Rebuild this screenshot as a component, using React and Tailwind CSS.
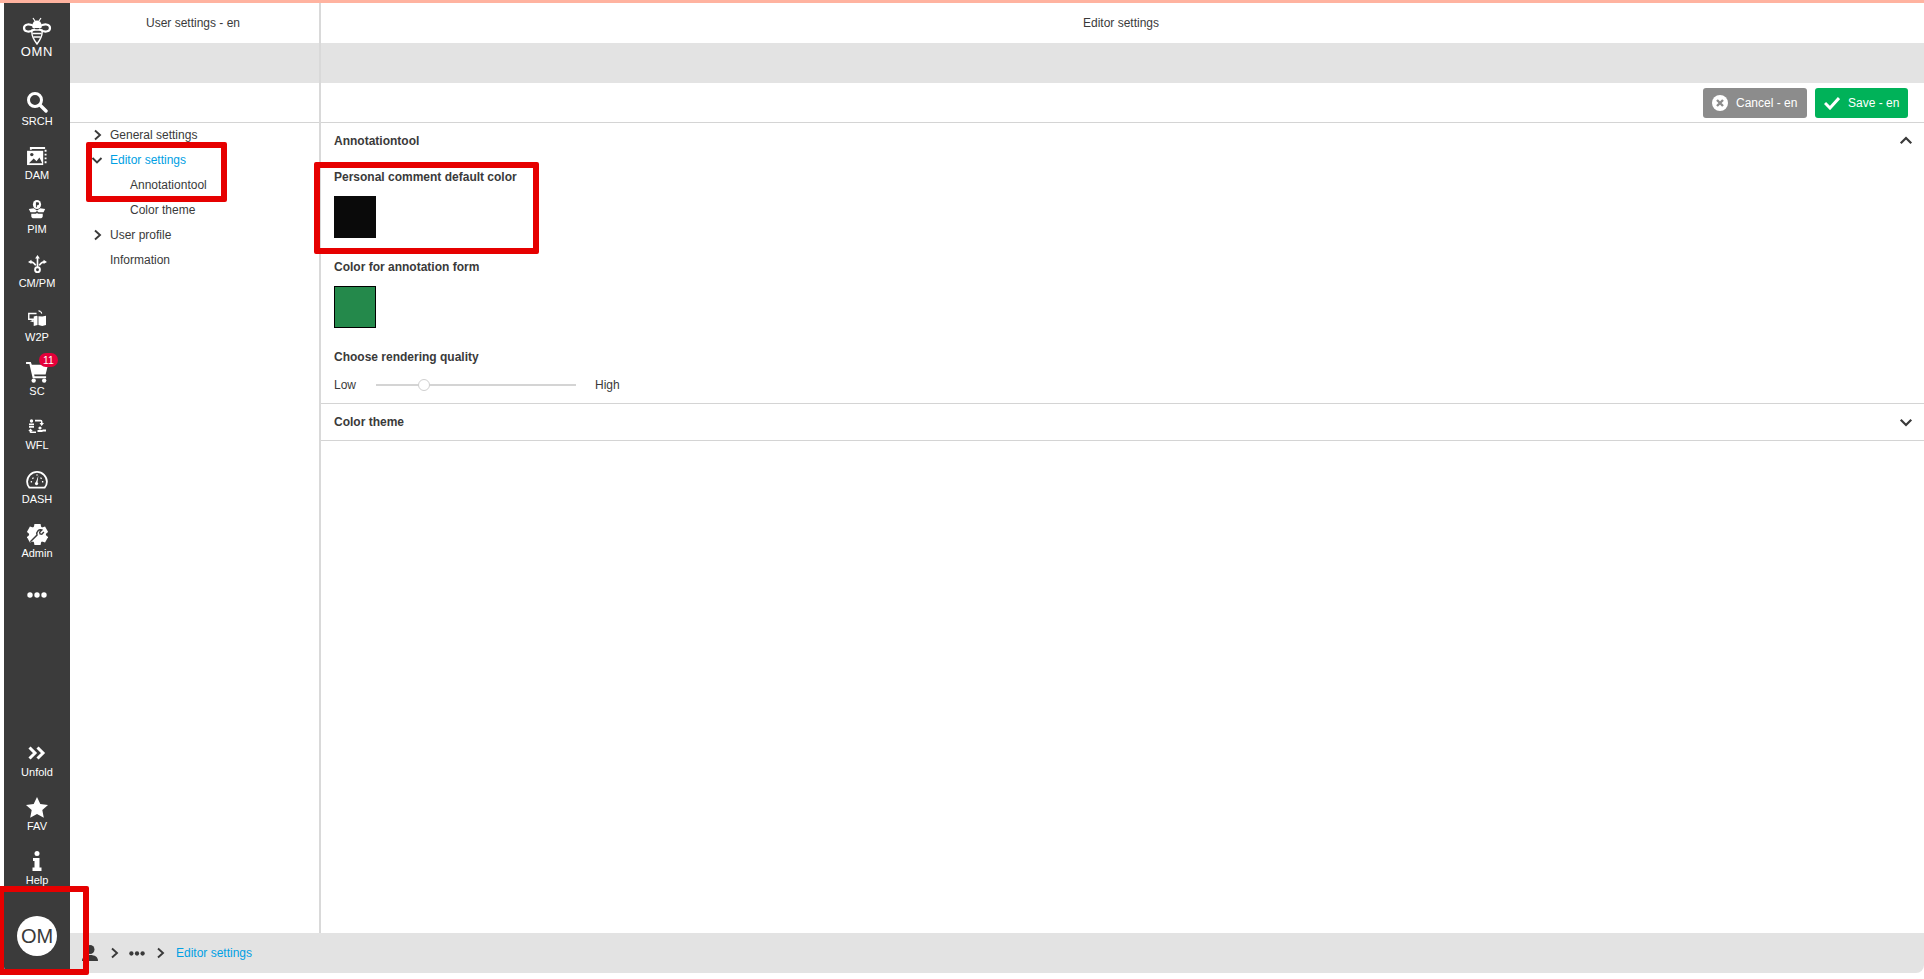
import React from 'react';

const Bee = () => (
  <svg width="30" height="28" viewBox="0 0 30 28" fill="none" stroke="#fff">
    {/* antennae + head */}
    <path d="M11 1l2 3M19 1l-2 3" strokeWidth="1.2" />
    <path d="M10.500 8a4.500 4.500 0 0 1 9 0v3h-9z" fill="#fff" stroke="none" />
    {/* wings */}
    <path d="M13 10C8 6 2 7 2 11s6 5 11 1" strokeWidth="2.200" />
    <path d="M17 10c5-4 11-3 11 1s-6 5-11 1" strokeWidth="2.200" />
    {/* body */}
    <path d="M10 13h10c1 5-2 10-5 14-3-4-6-9-5-14z" strokeWidth="1.4" />
    <path d="M10.5 16.5h9M11.5 20h7" strokeWidth="1.6" />
  </svg>
);

const SearchIcon = () => (
  <svg width="22" height="22" viewBox="0 0 22 22" fill="none" stroke="#fff">
    <circle cx="9" cy="9" r="6.5" strokeWidth="3" />
    <path d="M14 14l6 6" strokeWidth="3.4" strokeLinecap="round" />
  </svg>
);

const DamIcon = () => (
  <svg width="21" height="19" viewBox="0 0 22 20" fill="#fff">
    <path d="M3 0h16v2H5v1H3z" />
    <path d="M0 4h17v15H0z" />
    <path d="M18.5 3h2v2h-2zM18.5 7h2v2h-2zM18.5 11h2v2h-2zM18.5 15h2v2h-2z" />
    <circle cx="5" cy="8" r="1.8" fill="#3b3b3b" />
    <path d="M2 17l5-5 3 3 3-4 3 6z" fill="#3b3b3b" />
  </svg>
);

const PimIcon = () => (
  <svg width="18" height="20" viewBox="0 0 22 22" fill="#fff" preserveAspectRatio="none">
    <circle cx="11" cy="5" r="5" />
    <path d="M9.7 2.5h2.2a1.6 1.6 0 0 1 0 3.2h-1.1V8H9.7z" fill="#3b3b3b" />
    <path d="M1 10l6-1 4 2.5L15 9l6 1-2 3.5H13l-2-1.5L9 13.500H3z" />
    <path d="M4 15h6l1-1 1 1h6v3c0 1-1 2-2 2H6c-1 0-2-1-2-2z" />
  </svg>
);

const CmIcon = () => (
  <svg width="19" height="19" viewBox="0 0 22 22" fill="none" stroke="#fff" strokeWidth="1.9">
    <path d="M11 3v11M3 8c3 0 4 1 6 4M19 8c-3 0-4 1-6 4" />
    <circle cx="11" cy="17" r="2.800" strokeWidth="2.200" />
    <path d="M11 0l2.800 4H8.200zM0 8l4-2.500v5zM22 8l-4-2.500v5z" fill="#fff" stroke="none" />
  </svg>
);

const W2pIcon = () => (
  <svg width="19" height="17" viewBox="0 0 20 18" fill="#fff">
    <path d="M0 3h9v1.500H1.500V9H7v1.500H0z" />
    <path d="M2 12l4-2v3z" />
    <path d="M9 6l-3 1v10l4-1V6.500zM11 6.500V16l4 1 4-1V6l-4 1z" />
    <path d="M13 1a3 3 0 0 1 2 3h-1a2 2 0 0 0-1.500-2z" />
    <path d="M11 0l2.500 1-2 1.500z" />
  </svg>
);

const CartIcon = () => (
  <svg width="23" height="21" viewBox="0 0 24 22" fill="#fff">
    <path d="M0 0h5l1 3h17l-2.500 10H8.500l.4 2H21v2H7L3.500 2H0z" />
    <circle cx="8" cy="19.500" r="2.300" />
    <circle cx="19" cy="19.500" r="2.300" />
  </svg>
);

const WflIcon = () => (
  <svg width="18" height="14" viewBox="0 0 18 14" fill="#fff">
    {/* person top left */}
    <circle cx="3.500" cy="2" r="1.700" />
    <path d="M1 4.500h5v1.700H1zM1 7h5v1.700H1z" />
    {/* person bottom right */}
    <circle cx="12" cy="9" r="1.600" />
    <path d="M9.500 11h5v2h-5zM14.500 10.500H18v2h-3.500z" />
    {/* cycle arrows */}
    <path d="M7 .8h5.500a2 2 0 0 1 2 2V4H16l-2.300 3L11.500 4h1.500V2.500H7z" />
    <path d="M2.500 9.500L4.800 12 3.500 12v.5H8V14H3a1.500 1.500 0 0 1-1.500-1.500V12H.3z" />
  </svg>
);

const DashIcon = () => (
  <svg width="22" height="18" viewBox="0 0 24 20" fill="none" stroke="#fff">
    <path d="M3.500 18.500C1.800 16.500 1 14.500 1 12a11 11 0 0 1 22 0c0 2.500-.8 4.500-2.500 6.500z" strokeWidth="2" />
    <path d="M13.500 5l-1 8h-2z" fill="#fff" stroke="none" />
    <circle cx="11.500" cy="14" r="1.800" fill="#fff" stroke="none" />
    <path d="M5 12h1.500M7 7.500l1 1M17 7.500l-1 1M17.500 12H19M12 4v1" strokeWidth="1.800" />
  </svg>
);

const AdminIcon = () => (
  <svg width="21" height="21" viewBox="0 0 22 22" fill="#fff">
    <circle cx="11" cy="11" r="8.800" />
    {/* gear teeth */}
    {[0, 60, 120, 180, 240, 300].map((a) => (
      <path key={a} d="M7.800 0h6.400l.8 4H7z" transform={`rotate(${a} 11 11)`} />
    ))}
    {/* wrench cut */}
    <path d="M3.500 18.500L10.500 11.500a4 4 0 0 1 5-5.200l-2.200 2.200.4 1.800 1.800.4 2.200-2.200" fill="none" stroke="#3b3b3b" strokeWidth="1.500" />
  </svg>
);

const UnfoldIcon = () => (
  <svg width="18" height="14" viewBox="0 0 18 14" fill="none" stroke="#fff" strokeWidth="3">
    <path d="M1.500 1.500L7 7l-5.500 5.500M9.500 1.500L15 7l-5.500 5.500" />
  </svg>
);

const StarIcon = () => (
  <svg width="22" height="21" viewBox="0 0 22 21" fill="#fff">
    <path d="M11 0l3.300 7 7.700.9-5.700 5.200 1.500 7.600L11 16.900l-6.800 3.800 1.500-7.600L0 7.900 7.700 7z" />
  </svg>
);

const InfoIcon = () => (
  <svg width="10" height="20" viewBox="0 0 10 20" fill="#fff">
    <circle cx="5" cy="2.500" r="2.500" />
    <path d="M1 7h6.500v9.500H9.500V20H.5v-3.500H2.500V10H1z" />
  </svg>
);

const Chevron = ({ dir = 'right', size = 12, className = '' }) => {
  const d = {
    right: 'M4 1.500L9 6l-5 4.500',
    down: 'M1.500 4L6 8.500 10.500 4',
    up: 'M1.500 8L6 3.500 10.500 8',
  }[dir];
  return (
    <svg width={size} height={size} viewBox="0 0 12 12" fill="none" stroke="#3a3a3a" strokeWidth="1.900" className={className}>
      <path d={d} />
    </svg>
  );
};

const Dots = ({ color = '#fff', width = 20, height = 6 }) => (
  <svg width={width} height={height} viewBox="0 0 20 6" fill={color} className="block">
    <circle cx="3" cy="3" r="2.700" />
    <circle cx="10" cy="3" r="2.700" />
    <circle cx="17" cy="3" r="2.700" />
  </svg>
);

const SideItem = ({ icon, label, badge }) => (
  <div className="relative flex h-[54px] flex-col items-center pt-[4px]">
    <div className="flex h-[24px] items-center justify-center">{icon}</div>
    <span className="h-[14px] text-[11px] leading-[14px] text-white">{label}</span>
    {badge && (
      <span className="absolute left-[35px] top-[-3px] flex h-[14px] w-[19px] items-center justify-center rounded-full bg-[#e4003a] text-[10.5px] leading-none text-white">
        {badge}
      </span>
    )}
  </div>
);

const Sidebar = () => (
  <aside className="flex w-[66px] flex-none flex-col rounded-bl-md bg-[#3b3b3b]">
    <div className="flex h-[83px] flex-col items-center pt-[14px]">
      <Bee />
      <span className="mt-[-1px] text-[13px] leading-[16px] tracking-[0.7px] text-white">OMN</span>
    </div>
    <SideItem icon={<SearchIcon />} label="SRCH" />
    <SideItem icon={<DamIcon />} label="DAM" />
    <SideItem icon={<PimIcon />} label="PIM" />
    <SideItem icon={<CmIcon />} label="CM/PM" />
    <SideItem icon={<W2pIcon />} label="W2P" />
    <SideItem icon={<CartIcon />} label="SC" badge="11" />
    <SideItem icon={<WflIcon />} label="WFL" />
    <SideItem icon={<DashIcon />} label="DASH" />
    <SideItem icon={<AdminIcon />} label="Admin" />
    <div className="flex h-[46px] items-center justify-center">
      <Dots />
    </div>
    <div className="mt-auto">
      <SideItem icon={<UnfoldIcon />} label="Unfold" />
      <SideItem icon={<StarIcon />} label="FAV" />
      <SideItem icon={<InfoIcon />} label="Help" />
      <div className="flex h-[74px] justify-center pt-[17px]">
        <div className="flex h-[40px] w-[40px] items-center justify-center rounded-full bg-white text-[20px] leading-none text-[#3a3a3a]">
          OM
        </div>
      </div>
    </div>
  </aside>
);

const TreeRow = ({ chevron, active, indent, children }) => (
  <div className="flex h-[25px] items-center">
    <span className="flex w-[40px] flex-none items-center justify-end pr-[7px]">
      {chevron && <Chevron dir={chevron} />}
    </span>
    <span className={`${indent ? 'pl-[20px]' : ''} ${active ? 'text-[#00a0e3]' : 'text-[#3a3a3a]'}`}>
      {children}
    </span>
  </div>
);

const PanelHead = ({ title, actions, titleClass }) => (
  <>
    <div className={`flex h-[40px] flex-none items-center justify-center ${titleClass}`}>{title}</div>
    <div className="h-[40px] flex-none bg-[#e3e3e3]" />
    <div className="flex h-[40px] flex-none items-center justify-end gap-[8px] border-b border-[#d4d4d4] pr-[16px]">
      {actions}
    </div>
  </>
);

const Swatch = ({ className }) => <div className={`h-[42px] w-[42px] ${className}`} />;

const FieldLabel = ({ children, className = '' }) => (
  <div className={`h-[18px] font-bold leading-[18px] ${className}`}>{children}</div>
);

const App = () => (
  <div className="relative h-[979px] w-[1924px] overflow-hidden bg-white text-[12px] text-[#3a3a3a] [font-family:'Liberation_Sans',Arial,sans-serif]">
    <div className="h-[3px] bg-[#ffb3a0]" />
    <div className="flex h-[970px] pl-[4px]">
      <Sidebar />
      <div className="flex min-w-0 flex-1 flex-col">
        <div className="flex min-h-0 flex-1">
          {/* tree column */}
          <div className="flex w-[251px] flex-none flex-col border-r-2 border-[#d9d9d9]">
            <PanelHead title="User settings - en" titleClass="pr-[3px]" />
            <div className="-mt-px">
              <TreeRow chevron="right">General settings</TreeRow>
              <TreeRow chevron="down" active>Editor settings</TreeRow>
              <TreeRow indent>Annotationtool</TreeRow>
              <TreeRow indent>Color theme</TreeRow>
              <TreeRow chevron="right">User profile</TreeRow>
              <TreeRow>Information</TreeRow>
            </div>
          </div>

          {/* editor column */}
          <div className="flex min-w-0 flex-1 flex-col">
            <PanelHead
              title="Editor settings"
              titleClass="pr-[3px]"
              actions={
                <>
                  <button className="flex h-[30px] w-[104px] items-center gap-[8px] rounded-[3px] bg-[#8c8c8c] pl-[9px] text-white">
                    <svg width="16" height="16" viewBox="0 0 16 16">
                      <circle cx="8" cy="8" r="8" fill="#fff" />
                      <path d="M5 5l6 6M11 5l-6 6" stroke="#8c8c8c" strokeWidth="2.400" />
                    </svg>
                    Cancel - en
                  </button>
                  <button className="flex h-[30px] w-[93px] items-center gap-[8px] rounded-[3px] bg-[#00b259] pl-[9px] text-white">
                    <svg width="16" height="14" viewBox="0 0 16 14" fill="none" stroke="#fff" strokeWidth="3">
                      <path d="M1 7l5 5 9-10" />
                    </svg>
                    Save - en
                  </button>
                </>
              }
            />
            <section className="border-b border-[#d4d4d4] pb-[9px]">
              <div className="flex h-[36px] items-center justify-between pl-[13px] pr-[11px]">
                <span className="font-bold">Annotationtool</span>
                <Chevron dir="up" size={14} />
              </div>
              <div className="pl-[13px] pt-[9px]">
                <FieldLabel>Personal comment default color</FieldLabel>
                <Swatch className="mt-[10px] bg-[#0a0a0a]" />
                <FieldLabel className="mt-[20px]">Color for annotation form</FieldLabel>
                <Swatch className="mt-[10px] border border-black bg-[#24894b]" />
                <FieldLabel className="mt-[20px]">Choose rendering quality</FieldLabel>
                <div className="mt-[10px] flex h-[18px] items-center">
                  <span className="w-[42px]">Low</span>
                  <div className="relative h-[2px] w-[200px] bg-[#d4d4d4]">
                    <div className="absolute left-[42px] top-[-5px] h-[12px] w-[12px] rounded-full border border-[#cfcfcf] bg-white" />
                  </div>
                  <span className="ml-[19px]">High</span>
                </div>
              </div>
            </section>
            <section className="flex h-[37px] items-center justify-between border-b border-[#d4d4d4] pl-[13px] pr-[11px]">
              <span className="font-bold">Color theme</span>
              <Chevron dir="down" size={14} />
            </section>
          </div>
        </div>

        {/* breadcrumb */}
        <div className="flex h-[40px] flex-none items-center rounded-br-lg bg-[#e3e3e3] pl-[12px]">
          <svg width="16" height="16" viewBox="0 0 16 16" fill="#3a3a3a">
            <circle cx="8" cy="4.500" r="4.500" />
            <path d="M0 16c0-4 3-6 8-6s8 2 8 6z" />
          </svg>
          <Chevron className="ml-[10px]" />
          <span className="ml-[9px]">
            <Dots color="#3a3a3a" width={16} height={5} />
          </span>
          <Chevron className="ml-[9px]" />
          <span className="ml-[10px] text-[#00a0e3]">Editor settings</span>
        </div>
      </div>
    </div>

    {/* red annotation frames drawn over the screenshot */}
    <div className="absolute left-[86px] top-[142px] h-[60px] w-[141px] rounded-[2px] border-[6px] border-[#e60000]" />
    <div className="absolute left-[314px] top-[162px] h-[92px] w-[225px] rounded-[2px] border-[6px] border-[#e60000]" />
    <div className="absolute left-[-2px] top-[886px] h-[89px] w-[91px] rounded-[2px] border-[6px] border-[#e60000]" />
  </div>
);

export default App;
